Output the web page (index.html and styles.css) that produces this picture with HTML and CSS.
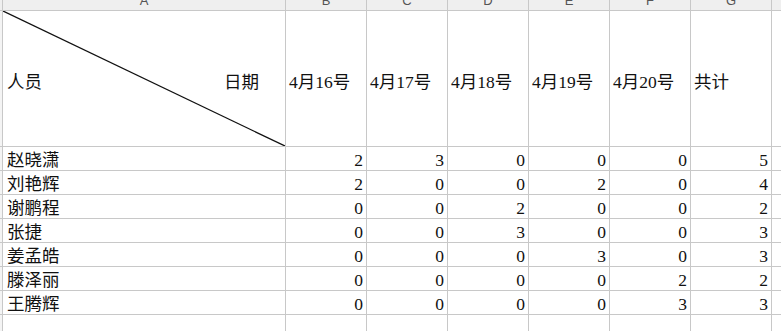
FILE: index.html
```html
<!DOCTYPE html>
<html lang="zh-CN">
<head>
    <meta charset="UTF-8">
    <meta name="viewport" content="width=device-width, initial-scale=1.0">
    <title>人员统计</title>
    <link rel="stylesheet" href="styles.css">
</head>
<body>
    <div class="sheet">
        <!-- column letters -->
        <div class="stub head"></div>
        <div class="colhead"><span>A</span></div>
        <div class="colhead"><span>B</span></div>
        <div class="colhead"><span>C</span></div>
        <div class="colhead"><span>D</span></div>
        <div class="colhead"><span>E</span></div>
        <div class="colhead"><span>F</span></div>
        <div class="colhead"><span>G</span></div>
        <div class="colhead"></div>

        <!-- title row -->
        <div class="stub"></div>
        <div class="cell split">
            <svg class="slash" viewBox="0 0 100 100" preserveAspectRatio="none">
                <line x1="0" y1="0" x2="100" y2="100" vector-effect="non-scaling-stroke"></line>
            </svg>
            <span>人员</span>
            <span>日期</span>
        </div>
        <div class="cell title">4月16号</div>
        <div class="cell title">4月17号</div>
        <div class="cell title">4月18号</div>
        <div class="cell title">4月19号</div>
        <div class="cell title">4月20号</div>
        <div class="cell title">共计</div>
        <div class="cell"></div>

        <div class="stub"></div>
        <div class="cell name">赵晓潇</div>
        <div class="cell num">2</div>
        <div class="cell num">3</div>
        <div class="cell num">0</div>
        <div class="cell num">0</div>
        <div class="cell num">0</div>
        <div class="cell num">5</div>
        <div class="cell"></div>

        <div class="stub"></div>
        <div class="cell name">刘艳辉</div>
        <div class="cell num">2</div>
        <div class="cell num">0</div>
        <div class="cell num">0</div>
        <div class="cell num">2</div>
        <div class="cell num">0</div>
        <div class="cell num">4</div>
        <div class="cell"></div>

        <div class="stub"></div>
        <div class="cell name">谢鹏程</div>
        <div class="cell num">0</div>
        <div class="cell num">0</div>
        <div class="cell num">2</div>
        <div class="cell num">0</div>
        <div class="cell num">0</div>
        <div class="cell num">2</div>
        <div class="cell"></div>

        <div class="stub"></div>
        <div class="cell name">张捷</div>
        <div class="cell num">0</div>
        <div class="cell num">0</div>
        <div class="cell num">3</div>
        <div class="cell num">0</div>
        <div class="cell num">0</div>
        <div class="cell num">3</div>
        <div class="cell"></div>

        <div class="stub"></div>
        <div class="cell name">姜孟皓</div>
        <div class="cell num">0</div>
        <div class="cell num">0</div>
        <div class="cell num">0</div>
        <div class="cell num">3</div>
        <div class="cell num">0</div>
        <div class="cell num">3</div>
        <div class="cell"></div>

        <div class="stub"></div>
        <div class="cell name">滕泽丽</div>
        <div class="cell num">0</div>
        <div class="cell num">0</div>
        <div class="cell num">0</div>
        <div class="cell num">0</div>
        <div class="cell num">2</div>
        <div class="cell num">2</div>
        <div class="cell"></div>

        <div class="stub"></div>
        <div class="cell name">王腾辉</div>
        <div class="cell num">0</div>
        <div class="cell num">0</div>
        <div class="cell num">0</div>
        <div class="cell num">0</div>
        <div class="cell num">3</div>
        <div class="cell num">3</div>
        <div class="cell"></div>

        <!-- empty row below -->
        <div class="stub"></div>
        <div class="cell"></div>
        <div class="cell"></div>
        <div class="cell"></div>
        <div class="cell"></div>
        <div class="cell"></div>
        <div class="cell"></div>
        <div class="cell"></div>
        <div class="cell"></div>
    </div>
</body>
</html>
```

FILE: styles.css
```css
body {
    margin: 0;
    overflow: hidden;
    background-color: #ffffff;
}
.sheet {
    display: grid;
    grid-template-columns: 2px 282px repeat(6, 80px) 1fr;
    grid-template-rows: 10px 135px repeat(7, 23px) 1fr;
    gap: 1px;
    height: 100vh;
    background-color: #c8c8c8;
    font-family: "Liberation Serif", "Noto Sans CJK SC", serif;
    font-size: 17.5px;
    color: #111111;
}
.stub {
    background-color: #f4f4f4;
}
.stub.head {
    background-color: #efefef;
}
.colhead {
    display: flex;
    justify-content: center;
    align-items: flex-end;
    overflow: hidden;
    padding-bottom: 3px;
    box-sizing: border-box;
    background-color: #efefef;
    font-family: "Liberation Sans", sans-serif;
    font-size: 13px;
    line-height: 13px;
    color: #555555;
}
.cell {
    display: flex;
    align-items: flex-end;
    background-color: #ffffff;
    line-height: 20px;
    white-space: nowrap;
    overflow: hidden;
}
.title {
    align-items: center;
    padding: 6px 0 0 3px;
}
.split {
    position: relative;
    align-items: center;
    justify-content: space-between;
    padding: 6px 26px 0 4px;
}
.slash {
    position: absolute;
    top: 0;
    left: 0;
    width: 100%;
    height: 100%;
}
.slash line {
    stroke: #111111;
    stroke-width: 1.3;
}
.name {
    padding-left: 4px;
}
.num {
    justify-content: flex-end;
    padding-right: 3px;
}
```
